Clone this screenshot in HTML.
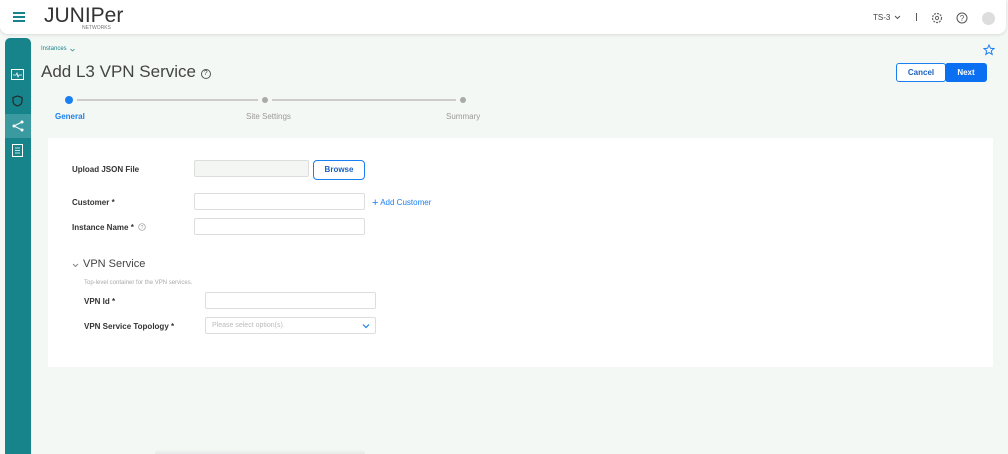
<!DOCTYPE html>
<html><head><meta charset="utf-8"><style>
*{box-sizing:border-box;margin:0;padding:0}
body{width:1008px;height:454px;overflow:hidden;background:#f4f8f5;font-family:"Liberation Sans",sans-serif;position:relative;color:#333}
.hdr{position:absolute;left:0;top:0;width:1006px;height:34px;background:#fff;border-radius:0 0 8px 8px;box-shadow:0 1px 3px rgba(0,0,0,.12)}
.side{position:absolute;left:5px;top:38px;width:26px;height:416px;background:#17838a;border-radius:5px 5px 0 0}
.abs{position:absolute}
.card{position:absolute;left:48px;top:138px;width:945px;height:229px;background:#fff}
.lbl{position:absolute;font-size:8px;font-weight:bold;color:#333}
.inp{position:absolute;height:17px;border:1px solid #ddd;background:#fff;border-radius:2px}
</style></head><body>
<div class="hdr">
 <div class="abs" style="left:13px;top:12px;width:12px;height:2px;background:#17838a;box-shadow:0 4px 0 #17838a,0 8px 0 #17838a"></div>
 <div class="abs" style="left:44px;top:4px;font-size:21px;letter-spacing:0px;color:#333;transform:scaleX(1.0)">JUNIPer</div>
 <div class="abs" style="left:82px;top:25px;font-size:5px;color:#777">NETWORKS</div>
 <div class="abs" style="left:873px;top:13px;font-size:8px;color:#444">TS-3</div>
 <svg class="abs" style="left:894px;top:15px" width="7" height="5" viewBox="0 0 7 5"><path d="M1 1l2.5 2.5L6 1" fill="none" stroke="#555"/></svg>
 <div class="abs" style="left:916px;top:13px;width:1px;height:8px;background:#555"></div>
 <svg class="abs" style="left:931px;top:12px" width="12" height="12" viewBox="0 0 12 12"><circle cx="6" cy="6" r="4.5" fill="none" stroke="#666" stroke-width="1.2" stroke-dasharray="2 1"/><circle cx="6" cy="6" r="1.6" fill="none" stroke="#666"/></svg>
 <svg class="abs" style="left:956px;top:12px" width="12" height="12" viewBox="0 0 12 12"><circle cx="6" cy="6" r="5" fill="none" stroke="#555"/><text x="6" y="9" font-size="8" text-anchor="middle" fill="#555" font-family="Liberation Sans">?</text></svg>
 <div class="abs" style="left:982px;top:12px;width:13px;height:13px;border-radius:50%;background:#ddd"></div>
</div>
<div class="side">
 <svg class="abs" style="left:6px;top:31px" width="13" height="11" viewBox="0 0 13 11"><rect x=".5" y=".5" width="12" height="10" fill="none" stroke="#fff"/><path d="M2 6h3l1-2 1 4 1-2h3" fill="none" stroke="#fff" stroke-width=".8"/></svg>
 <svg class="abs" style="left:7px;top:57px" width="11" height="12" viewBox="0 0 11 12"><path d="M5.5 1L1 2.5v3.5c0 3 2.5 4.5 4.5 5 2-.5 4.5-2 4.5-5V2.5z" fill="none" stroke="#222" stroke-width="1.1"/></svg>
 <div class="abs" style="left:0;top:76px;width:26px;height:24px;background:#3a9aa0"></div>
 <svg class="abs" style="left:7px;top:82px" width="12" height="12" viewBox="0 0 12 12"><circle cx="2" cy="6" r="1.5" fill="#fff"/><circle cx="10" cy="2" r="1.5" fill="#fff"/><circle cx="10" cy="10" r="1.5" fill="#fff"/><path d="M2 6L10 2M2 6L10 10" stroke="#fff"/></svg>
 <svg class="abs" style="left:7px;top:106px" width="11" height="13" viewBox="0 0 11 13"><rect x=".5" y=".5" width="10" height="12" fill="none" stroke="#fff"/><path d="M3 4h5M3 6.5h5M3 9h5" stroke="#fff" stroke-width=".8"/></svg>
</div>
<div class="abs" style="left:41px;top:46px;font-size:6px;color:#17838a">Instances</div>
<svg class="abs" style="left:70px;top:48px" width="5" height="4" viewBox="0 0 5 4"><path d="M.5 1l2 2 2-2" fill="none" stroke="#17838a" stroke-width=".7"/></svg>
<div class="abs" style="left:41px;top:62px;font-size:17px;color:#444">Add L3 VPN Service <span style="font-size:10px;display:inline-block;width:10px;height:10px;border:1px solid #555;border-radius:50%;line-height:8px;text-align:center;vertical-align:2px;font-size:7px">?</span></div>
<svg class="abs" style="left:983px;top:44px" width="12" height="12" viewBox="0 0 12 12"><path d="M6 1l1.5 3.3 3.5.3-2.7 2.3.9 3.5L6 8.5 2.8 10.4l.9-3.5L1 4.6l3.5-.3z" fill="none" stroke="#1a7ff0"/></svg>
<div class="abs" style="left:896px;top:63px;width:50px;height:19px;border:1px solid #1a7ff0;border-radius:3px;background:#fff;color:#1a60c0;font-size:8px;font-weight:bold;text-align:center;line-height:17px">Cancel</div>
<div class="abs" style="left:945px;top:63px;width:42px;height:19px;background:#0a6ff0;border-radius:3px;color:#fff;font-size:8px;font-weight:bold;text-align:center;line-height:19px">Next</div>
<div class="abs" style="left:65px;top:96px;width:8px;height:8px;border-radius:50%;background:#1a7ff0"></div>
<div class="abs" style="left:77px;top:99px;width:181px;height:2px;background:#ccc"></div>
<div class="abs" style="left:262px;top:97px;width:6px;height:6px;border-radius:50%;background:#aaa"></div>
<div class="abs" style="left:272px;top:99px;width:184px;height:2px;background:#ccc"></div>
<div class="abs" style="left:460px;top:97px;width:6px;height:6px;border-radius:50%;background:#aaa"></div>
<div class="abs" style="left:55px;top:112px;font-size:8px;font-weight:bold;color:#1a7ff0">General</div>
<div class="abs" style="left:246px;top:112px;font-size:8px;color:#999">Site Settings</div>
<div class="abs" style="left:446px;top:112px;font-size:8px;color:#999">Summary</div>
<div class="card"></div>
<div class="lbl" style="left:72px;top:165px">Upload JSON File</div>
<div class="inp" style="left:194px;top:160px;width:115px;background:#f3f6f3"></div>
<div class="abs" style="left:313px;top:160px;width:52px;height:20px;border:1px solid #1a7ff0;border-radius:4px;font-size:8px;font-weight:bold;color:#1a60c0;text-align:center;line-height:18px">Browse</div>
<div class="lbl" style="left:72px;top:198px">Customer *</div>
<div class="inp" style="left:194px;top:193px;width:171px"></div>
<div class="abs" style="left:372px;top:197px;font-size:8px;color:#1a7ff0"><span style="font-size:11px;vertical-align:-1px">+</span> Add Customer</div>
<div class="lbl" style="left:72px;top:223px">Instance Name *</div>
<svg class="abs" style="left:138px;top:223px" width="8" height="8" viewBox="0 0 8 8"><circle cx="4" cy="4" r="3.3" fill="none" stroke="#999" stroke-width=".7"/><text x="4" y="6" font-size="5" text-anchor="middle" fill="#999" font-family="Liberation Sans">?</text></svg>
<div class="inp" style="left:194px;top:218px;width:171px"></div>
<svg class="abs" style="left:72px;top:263px" width="7" height="5" viewBox="0 0 7 5"><path d="M1 1l2.5 2.5L6 1" fill="none" stroke="#888"/></svg>
<div class="abs" style="left:83px;top:258px;font-size:11px;color:#444">VPN Service</div>
<div class="abs" style="left:84px;top:280px;font-size:6px;color:#aaa">Top-level container for the VPN services.</div>
<div class="lbl" style="left:84px;top:297px">VPN Id *</div>
<div class="inp" style="left:205px;top:292px;width:171px"></div>
<div class="lbl" style="left:84px;top:322px">VPN Service Topology *</div>
<div class="inp" style="left:205px;top:317px;width:171px;font-size:7px;color:#bbb;padding:4px 6px">Please select option(s).</div>
<svg class="abs" style="left:362px;top:323px" width="8" height="6" viewBox="0 0 8 6"><path d="M1 1.5l3 3 3-3" fill="none" stroke="#1a7ff0" stroke-width="1.2"/></svg>
<div class="abs" style="left:155px;top:449px;width:210px;height:5px;background:linear-gradient(#f4f8f5,#e5ebe8);border-radius:6px 6px 0 0"></div>
</body></html>
